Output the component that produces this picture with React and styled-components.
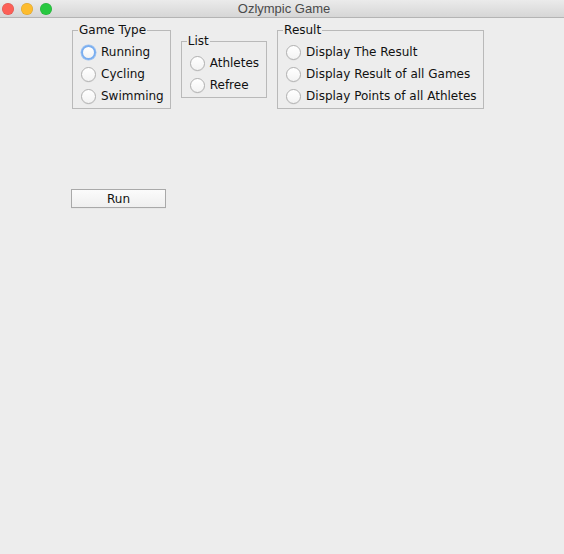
import React, { useState } from "react";
import styled, { createGlobalStyle } from "styled-components";

const GlobalStyle = createGlobalStyle`
  html, body {
    margin: 0;
    padding: 0;
    background: #ededed;
  }
  body {
    font-family: "DejaVu Sans", "Liberation Sans", sans-serif;
    font-size: 12px;
    color: #1a1a1a;
  }
`;

const Window = styled.div`
  width: 564px;
  height: 554px;
  display: flex;
  flex-direction: column;
  background: #ededed;
  overflow: hidden;
`;

const TitleBar = styled.div`
  height: 17px;
  flex: none;
  display: flex;
  align-items: center;
  position: relative;
  background: linear-gradient(to bottom, #ebebeb, #d6d6d6);
  border-bottom: 1px solid #b4b4b4;
`;

const Lights = styled.div`
  display: flex;
  gap: 7px;
  padding-left: 2px;
`;

const Light = styled.span`
  width: 12px;
  height: 12px;
  border-radius: 50%;
  background: ${({ color }) => color};
  box-shadow: inset 0 0 0 0.5px rgba(0, 0, 0, 0.15);
`;

const Title = styled.div`
  position: absolute;
  left: 0;
  right: 0;
  text-align: center;
  font-family: "Liberation Sans", sans-serif;
  font-size: 13px;
  color: #4a4a4a;
  padding-left: 4px;
`;

const Content = styled.div`
  padding: 5px 0 0 71px;
  display: flex;
  flex-direction: column;
  align-items: flex-start;
`;

const GroupRow = styled.div`
  display: flex;
  align-items: center;
  gap: 10px;
  padding-left: 1px;
`;

const Group = styled.fieldset`
  margin: 0;
  padding: 4px ${({ padRight }) => padRight}px 1px 8px;
  border: 1px solid #b9b9b9;
  min-width: 0;
  display: flex;
  flex-direction: column;
`;

const Legend = styled.legend`
  padding: 0 1px;
  margin-left: -3px;
  font-size: 12px;
  line-height: 14px;
  color: #111;
`;

const Option = styled.label`
  display: flex;
  align-items: center;
  gap: 5px;
  height: 22px;
  white-space: nowrap;
  font-size: 12px;
  color: #111;
`;

const Circle = styled.span`
  width: 15px;
  height: 15px;
  box-sizing: border-box;
  border-radius: 50%;
  flex: none;
  border: ${({ focused }) => (focused ? "2px solid #7aaef0" : "1px solid #b0b0b0")};
  background: linear-gradient(to bottom, #ffffff, #f3f3f3);
  box-shadow: ${({ focused }) =>
    focused ? "0 0 0 0.5px #9cc2f2" : "0 0.5px 0.5px rgba(0,0,0,0.08)"};
`;

const RunButton = styled.button`
  margin-top: 80px;
  width: 95px;
  height: 19px;
  padding: 0;
  border: 1px solid #a9a9a9;
  background: linear-gradient(to bottom, #fbfbfb, #efefef);
  font-family: "DejaVu Sans", sans-serif;
  font-size: 12px;
  color: #111;
  box-shadow: 0 0.5px 0 rgba(0, 0, 0, 0.05);
`;

const groups = [
  { title: "Game Type", padRight: 6, items: ["Running", "Cycling", "Swimming"] },
  { title: "List", padRight: 7, items: ["Athletes", "Refree"] },
  {
    title: "Result",
    padRight: 6,
    items: ["Display The Result", "Display Result of all Games", "Display Points of all Athletes"],
  },
];

export default function App() {
  const [selected] = useState({});

  return (
    <>
      <GlobalStyle />
      <Window>
        <TitleBar>
          <Lights>
            <Light color="#fc5f57" />
            <Light color="#fdbc2e" />
            <Light color="#28c840" />
          </Lights>
          <Title>Ozlympic Game</Title>
        </TitleBar>
        <Content>
          <GroupRow>
            {groups.map((g, gi) => (
              <Group key={g.title} padRight={g.padRight}>
                <Legend>{g.title}</Legend>
                {g.items.map((item, i) => (
                  <Option key={item}>
                    <Circle focused={gi === 0 && i === 0 && !selected[item]} />
                    {item}
                  </Option>
                ))}
              </Group>
            ))}
          </GroupRow>
          <RunButton>Run</RunButton>
        </Content>
      </Window>
    </>
  );
}
